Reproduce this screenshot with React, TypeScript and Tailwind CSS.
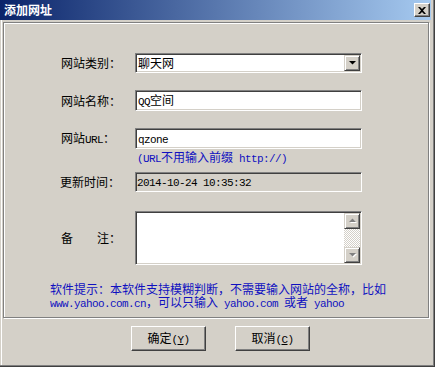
import React from "react";

const M = ({ children }: { children: React.ReactNode }) => (
  <span className="font-['Liberation_Mono','DejaVu_Sans_Mono',monospace] text-[11px] tracking-[-0.6px]">
    {children}
  </span>
);

const sunken =
  "border border-t-[#808080] border-l-[#808080] border-b-white border-r-white shadow-[inset_1px_1px_0_#404040,inset_-1px_-1px_0_#d4d0c8]";
const smallRaised =
  "bg-[#d4d0c8] border border-t-[#d4d0c8] border-l-[#d4d0c8] border-b-[#404040] border-r-[#404040] shadow-[inset_1px_1px_0_#fff,inset_-1px_-1px_0_#808080]";
const btnRaised =
  "bg-[#d4d0c8] border border-t-white border-l-white border-b-[#404040] border-r-[#404040] shadow-[inset_-1px_-1px_0_#808080]";

const DownArrow = ({ color = "#000", emboss = false }: { color?: string; emboss?: boolean }) => (
  <svg width="9" height="6" viewBox="0 0 9 6">
    {emboss && <path d="M2 2 H9 L5.5 5.5 Z" fill="#fff" />}
    <path d="M1 1 H8 L4.5 4.5 Z" fill={color} />
  </svg>
);

const UpArrow = () => (
  <svg width="9" height="6" viewBox="0 0 9 6">
    <path d="M2 5 H9 L5.5 1.5 Z" fill="#fff" />
    <path d="M1 4 H8 L4.5 0.5 Z" fill="#808080" />
  </svg>
);

export default function App() {
  return (
    <div className="w-[435px] h-[367px] bg-[#d4d0c8] border-r border-b border-[#404040] overflow-hidden font-['Noto_Sans_CJK_SC','Noto_Sans',sans-serif] text-[12px] leading-[14px] text-black">
      <div className="h-full flex flex-col border-r border-b border-[#808080] pr-[2px]">
        {/* Title bar */}
        <div className="h-[20px] shrink-0 flex items-center bg-[linear-gradient(to_right,#0a246a,#a6caf0)] pl-[4px] pr-[1px]">
          <span className="text-white font-bold text-[12px] leading-[14px]">添加网址</span>
          <div className={"ml-auto w-[16px] h-[14px] flex items-center justify-center " + btnRaised}>
            <svg width="8" height="7" viewBox="0 0 8 7">
              <path d="M0 0 H2 L4 2 L6 0 H8 L5 3.5 L8 7 H6 L4 5 L2 7 H0 L3 3.5 Z" fill="#000" />
            </svg>
          </div>
        </div>

        {/* Body */}
        <div className="flex-1 flex flex-col ml-[1px] border-l border-white">
          {/* Group box */}
          <div className="mt-[2px] ml-[1px] w-[426px] h-[296px] shrink-0 border border-[#808080] shadow-[1px_1px_0_#fff,inset_1px_1px_0_#fff] flex flex-col">
            {/* Category */}
            <div className="flex items-center ml-[57px] mt-[30px]">
              <div className="w-[74px]">网站类别：</div>
              <div className={"w-[227px] h-[20px] bg-white flex items-center " + sunken}>
                <span className="pl-[2px]">聊天网</span>
                <div className={"ml-auto mr-[1px] w-[16px] h-[16px] flex items-center justify-center " + smallRaised}>
                  <DownArrow />
                </div>
              </div>
            </div>

            {/* Name */}
            <div className="flex items-center ml-[57px] mt-[17px]">
              <div className="w-[74px]">网站名称：</div>
              <div className={"w-[227px] h-[21px] bg-white flex items-center " + sunken}>
                <span className="pl-[2px]">
                  <M>QQ</M>空间
                </span>
              </div>
            </div>

            {/* URL */}
            <div className="flex items-center ml-[57px] mt-[17px]">
              <div className="w-[74px]">
                网站<M>URL</M>：
              </div>
              <div className={"w-[227px] h-[21px] bg-white flex items-center " + sunken}>
                <span className="pl-[2px]">
                  <M>qzone</M>
                </span>
              </div>
            </div>
            <div className="ml-[133px] mt-[1px] text-[#1010c0]">
              <M>(URL</M>不用输入前缀<M> http://)</M>
            </div>

            {/* Time */}
            <div className="flex items-center ml-[56px] mt-[6px]">
              <div className="w-[75px]">更新时间：</div>
              <div className={"w-[227px] h-[20px] bg-[#d4d0c8] flex items-center " + sunken}>
                <span className="pl-[1px]">
                  <M>2014-10-24 10:35:32</M>
                </span>
              </div>
            </div>

            {/* Remarks */}
            <div className="flex items-center ml-[57px] mt-[19px]">
              <div className="w-[74px]">备　　注：</div>
              <div className={"w-[227px] h-[54px] bg-white flex " + sunken}>
                <div className="ml-auto mr-[1px] my-[1px] w-[16px] flex flex-col [background-image:repeating-conic-gradient(#d4d0c8_0_25%,#fff_0_50%)] [background-size:2px_2px]">
                  <div className={"w-[16px] h-[16px] flex items-center justify-center " + smallRaised}>
                    <UpArrow />
                  </div>
                  <div className="flex-1" />
                  <div className={"w-[16px] h-[16px] flex items-center justify-center " + smallRaised}>
                    <DownArrow color="#808080" emboss />
                  </div>
                </div>
              </div>
            </div>

            {/* Hint */}
            <div className="ml-[46px] mt-[17px] leading-[13px] text-[#1010c0]">
              <div>软件提示：本软件支持模糊判断，不需要输入网站的全称，比如</div>
              <div>
                <M>www.yahoo.com.cn</M>，可以只输入<M> yahoo.com </M>或者<M> yahoo</M>
              </div>
            </div>
          </div>

          {/* Buttons */}
          <div className="flex ml-[129px] mt-[8px] gap-[29px]">
            <div className={"w-[75px] h-[25px] flex items-center justify-center " + btnRaised}>
              <span>
                确定
                <M>
                  (<span className="underline">Y</span>)
                </M>
              </span>
            </div>
            <div className={"w-[75px] h-[25px] flex items-center justify-center " + btnRaised}>
              <span>
                取消
                <M>
                  (<span className="underline">C</span>)
                </M>
              </span>
            </div>
          </div>
        </div>
      </div>
    </div>
  );
}
